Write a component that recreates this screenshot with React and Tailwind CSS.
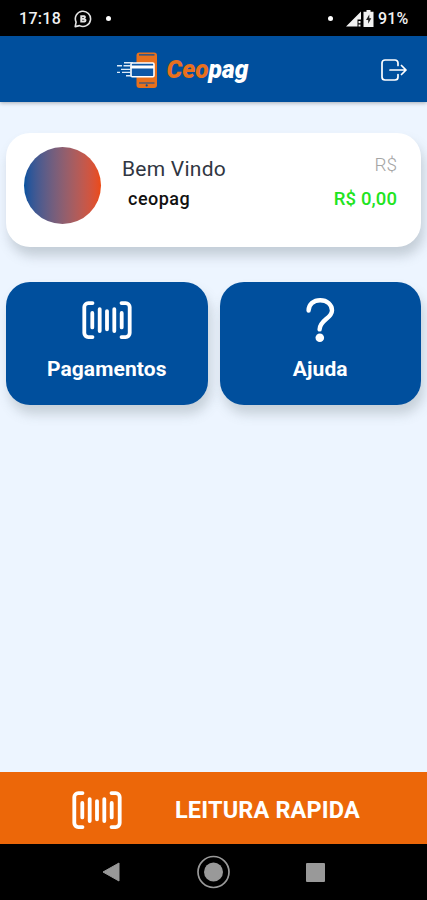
import React from 'react';

function BarcodeIcon() {
  return (
    <svg width="50" height="40" viewBox="0 0 50 40" fill="none" stroke="#fff" strokeLinecap="round" strokeLinejoin="round" strokeWidth="3.8" className="block">
      <path d="M10.5 3.1H6.3a4 4 0 0 0-4 4v26a4 4 0 0 0 4 4h4.2" />
      <path d="M39.5 3.1h4.2a4 4 0 0 1 4 4v26a4 4 0 0 1-4 4h-4.2" />
      <path d="M10.3 13v14.4M17.7 9.1v22M25 11.1v18.2M32.3 9.1v22M39.7 13v14.4" />
    </svg>
  );
}

function QuestionIcon() {
  return (
    <svg width="30" height="46" viewBox="0 0 30 46" fill="none" className="block">
      <path d="M3.6 13.6C3.6 7.2 8.600 3.200 15.200 3.200 22 3.200 27 7.400 27 13.400c0 8-12.400 9.600-12.400 19" stroke="#fff" strokeWidth="4.4" strokeLinecap="round" />
      <circle cx="14.8" cy="40.700" r="4.300" fill="#fff" />
    </svg>
  );
}

function Logo() {
  return (
    <div className="flex items-center">
      <svg width="42" height="38" viewBox="0 0 42 38" fill="none" className="block">
        <rect x="20.5" y="1.5" width="20.500" height="35.500" rx="3" fill="#e8701c" />
        <path d="M23 3.900h15.500M23 32h15.500" stroke="#054f9d" strokeWidth="1.100" />
        <circle cx="30.700" cy="34.400" r="1.100" fill="#054f9d" />
        <rect x="15" y="12" width="23" height="13.700" rx="1.200" fill="#0d57a6" stroke="#fff" strokeWidth="1.600" />
        <path d="M14.500 16h23.500" stroke="#fff" strokeWidth="3" />
        <path d="M8 11.700h9M1 14.800h5M7.500 14.800h8M5 18.400h10M1 21.400h3M6 21.400h9M10 24.800h6" stroke="#dceaf8" strokeWidth="1.400" />
      </svg>
      <svg width="86" height="34" viewBox="0 0 86 34" className="ml-2 block">
        <text x="0.5" y="25" textLength="82" lengthAdjust="spacingAndGlyphs" fontFamily="Roboto, sans-serif" fontSize="26" fontStyle="italic" fontWeight="900">
          <tspan fill="#e8701c">Ceo</tspan>
          <tspan fill="#fff">pag</tspan>
        </text>
      </svg>
    </div>
  );
}

function StatusBar() {
  return (
    <div className="flex h-9 shrink-0 items-center bg-black pl-[19px] pr-4 pt-px text-[16px] font-medium text-[#f2f2f2]">
      <span className="w-[43px] tracking-[0.3px]">17:18</span>
      <svg width="18" height="18" viewBox="0 0 18 18" fill="none" className="ml-3 block">
        <path d="M1.2 16.6l.9-4.5A7.6 7.6 0 1 1 5.5 15.600z" stroke="#e4e4e4" strokeWidth="1.6" strokeLinejoin="round" />
        <path d="M6.300 5.300h4a1.800 1.800 0 0 1 .8 3.300 2 2 0 0 1-.6 3.900H6.300z" fill="#e4e4e4" />
        <path d="M8 7.500h2M8 10.300h2.300" stroke="#333" strokeWidth=".8" />
      </svg>
      <span className="ml-[14px] size-[5px] rounded-full bg-white" />
      <span className="ml-auto size-[5px] rounded-full bg-white" />
      <svg width="16" height="16" viewBox="0 0 16 16" className="ml-[13px] block">
        <path d="M0 15.500L15 .5v8h-3.500v7z" fill="#f2f2f2" />
        <path d="M12.500 10h2v2.300h-2zM12.500 13.500h2v2h-2z" fill="#f2f2f2" />
      </svg>
      <svg width="11" height="17" viewBox="0 0 11 17" className="ml-px block">
        <path d="M3.500 0h4v1.800H10.500V17H.5V1.800h3z" fill="#f2f2f2" />
        <path d="M6.300 4.500L3 10h2.200v3.800L8.300 8.300H6.300z" fill="#222" />
      </svg>
      <span className="ml-1 w-[33px] whitespace-nowrap tracking-[0.2px]">91%</span>
    </div>
  );
}

function Header() {
  return (
    <header className="z-10 flex h-[66px] shrink-0 items-center justify-between bg-[#004f9d] pl-[116px] pr-5 pt-[2px] shadow-[0_1px_4px_rgba(0,0,0,0.3)]">
      <Logo />
      <button aria-label="Sair">
        <svg width="26" height="22" viewBox="0 0 26 22" fill="none" stroke="#fff" strokeWidth="1.7" strokeLinecap="round" strokeLinejoin="round" className="block">
          <path d="M17 6.500V4a3 3 0 0 0-3-3H4a3 3 0 0 0-3 3v14a3 3 0 0 0 3 3h10a3 3 0 0 0 3-3v-2.500" />
          <path d="M9 11h16M20.500 6.500L25 11l-4.500 4.500" />
        </svg>
      </button>
    </header>
  );
}

function WelcomeCard() {
  return (
    <section className="flex h-[114px] rounded-[24px] bg-white pl-[18px] pr-6 pt-[14px] shadow-[3px_9px_12px_rgba(90,105,110,0.28)]">
      <div className="size-[77px] rounded-full bg-linear-to-r from-[#00529f] to-[#ec4a12]" />
      <div className="ml-[21px] pt-[9px]">
        <p className="text-[21px] leading-[26px] tracking-[0.25px] text-[#303642]">Bem Vindo</p>
        <p className="ml-[6px] mt-[5px] text-[18px] font-medium leading-6 tracking-[0.5px] text-[#111]">ceopag</p>
      </div>
      <div className="ml-auto pt-[5px] text-right">
        <p className="text-[19px] font-light leading-[26px] text-[#a5a5a5]">R$</p>
        <p className="mt-[9px] text-[18.5px] font-medium leading-6 tracking-[0.1px] text-[#21e421]">R$ 0,00</p>
      </div>
    </section>
  );
}

function Tile({ icon, label }) {
  return (
    <button className="flex h-[123px] flex-col items-center rounded-[24px] bg-[#004f9d] pt-[14px] text-white shadow-[3px_9px_12px_rgba(90,105,110,0.26)]">
      <span className="flex h-12 items-center">{icon}</span>
      <span className="mt-[11px] text-[21px] font-bold leading-7 tracking-[0.1px]">{label}</span>
    </button>
  );
}

function NavBar() {
  return (
    <div className="flex h-14 shrink-0 items-center justify-center gap-[76px] bg-black">
      <svg width="18" height="20" viewBox="0 0 18 20" className="block">
        <path d="M1 10L17 1v18z" fill="#999" stroke="#999" strokeLinejoin="round" />
      </svg>
      <svg width="34" height="34" viewBox="0 0 34 34" className="block">
        <circle cx="17.5" cy="17" r="15.500" fill="none" stroke="#999" strokeWidth="1.700" />
        <circle cx="17.5" cy="17" r="9.500" fill="#999" />
      </svg>
      <span className="size-[19px] rounded-[1px] bg-[#999]" />
    </div>
  );
}

export default function App() {
  return (
    <div className="flex h-[900px] w-full flex-col overflow-hidden bg-[#edf5ff] font-['Roboto',sans-serif]">
      <StatusBar />
      <Header />
      <main className="flex-1 px-[6px] pt-[31px]">
        <WelcomeCard />
        <div className="mt-[35px] grid grid-cols-2 gap-3">
          <Tile icon={<BarcodeIcon />} label="Pagamentos" />
          <Tile icon={<QuestionIcon />} label="Ajuda" />
        </div>
      </main>
      <button className="flex h-[72px] shrink-0 items-center bg-[#ec6709] pl-[72px] pt-1 text-white">
        <BarcodeIcon />
        <span className="ml-[53px] pt-[2px] text-[23.5px] font-bold tracking-[0.15px]">LEITURA RAPIDA</span>
      </button>
      <NavBar />
    </div>
  );
}
